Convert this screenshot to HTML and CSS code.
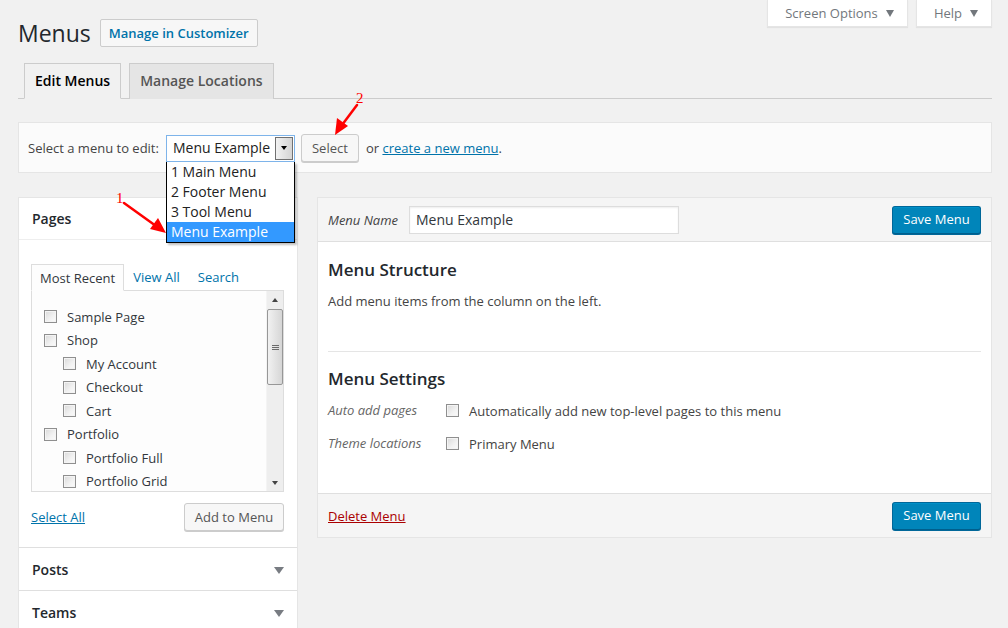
FILE: index.html
```html
<!DOCTYPE html>
<html>
<head>
<meta charset="utf-8">
<link rel="stylesheet" href="styles.css">
</head>
<body>
<div class="wrap">
  <div class="top">
    <div class="title-row">
      <h1 class="title">Menus</h1>
      <a class="btn btn-link">Manage in Customizer</a>
    </div>
    <div class="screen-links">
      <span class="screen-tab screen-tab-opts">Screen Options <i class="tri"></i></span>
      <span class="screen-tab screen-tab-help">Help <i class="tri"></i></span>
    </div>
  </div>

  <div class="nav-tabs">
    <span class="nav-tab active">Edit Menus</span>
    <span class="nav-tab">Manage Locations</span>
  </div>

  <div class="manage-bar">
    <span class="manage-label">Select a menu to edit:</span>
    <div class="select-wrap">
      <div class="fake-select">
        <span class="fake-select-value">Menu Example</span>
        <span class="fake-select-arrow"><i class="tri-black"></i></span>
      </div>
      <ul class="dropdown">
        <li>1 Main Menu</li>
        <li>2 Footer Menu</li>
        <li>3 Tool Menu</li>
        <li class="selected">Menu Example</li>
      </ul>
    </div>
    <span class="btn btn-select">Select</span>
    <span class="or-text">or <a class="link">create a new menu</a>.</span>
  </div>

  <div class="columns">
    <div class="left-col">
      <div class="acc-section open">
        <div class="acc-title">Pages</div>
        <div class="acc-content">
          <div class="tabs">
            <span class="tab active">Most Recent</span>
            <span class="tab">View All</span>
            <span class="tab">Search</span>
          </div>
          <div class="tab-panel">
            <ul class="checklist">
              <li><span class="cb"></span>Sample Page</li>
              <li><span class="cb"></span>Shop</li>
              <li class="child"><span class="cb"></span>My Account</li>
              <li class="child"><span class="cb"></span>Checkout</li>
              <li class="child"><span class="cb"></span>Cart</li>
              <li><span class="cb"></span>Portfolio</li>
              <li class="child"><span class="cb"></span>Portfolio Full</li>
              <li class="child"><span class="cb"></span>Portfolio Grid</li>
            </ul>
            <div class="scrollbar">
              <span class="sb-btn"><i class="sb-up"></i></span>
              <span class="sb-thumb"><i class="grip"></i><i class="grip"></i><i class="grip"></i></span>
              <span class="sb-track"></span>
              <span class="sb-btn"><i class="sb-down"></i></span>
            </div>
          </div>
          <div class="acc-actions">
            <a class="link">Select All</a>
            <span class="btn btn-add">Add to Menu</span>
          </div>
        </div>
      </div>
      <div class="acc-section">
        <div class="acc-title">Posts <i class="tri-gray"></i></div>
      </div>
      <div class="acc-section">
        <div class="acc-title">Teams <i class="tri-gray"></i></div>
      </div>
    </div>

    <div class="right-col">
      <div class="menu-header">
        <label class="menu-name-label">Menu Name</label>
        <div class="menu-name-input">Menu Example</div>
        <span class="btn-primary">Save Menu</span>
      </div>
      <div class="menu-body">
        <h3 class="section-title">Menu Structure</h3>
        <p class="hint">Add menu items from the column on the left.</p>
        <div class="divider"></div>
        <h3 class="section-title settings-title">Menu Settings</h3>
        <div class="setting-row">
          <span class="setting-label">Auto add pages</span>
          <span class="cb"></span>
          <span class="setting-text">Automatically add new top-level pages to this menu</span>
        </div>
        <div class="setting-row">
          <span class="setting-label">Theme locations</span>
          <span class="cb"></span>
          <span class="setting-text">Primary Menu</span>
        </div>
      </div>
      <div class="menu-footer">
        <a class="delete-link">Delete Menu</a>
        <span class="btn-primary">Save Menu</span>
      </div>
    </div>
  </div>
</div>

<svg class="annotations" width="1008" height="628" viewBox="0 0 1008 628">
  <g stroke="#ff0000" stroke-width="2.5" fill="none" stroke-linecap="round">
    <line x1="124" y1="203" x2="156" y2="226"/>
    <line x1="357" y1="105" x2="342" y2="125"/>
  </g>
  <g fill="#ff0000">
    <polygon points="166,233 150,229 158,218"/>
    <polygon points="335,135 337,118 348,126"/>
    <text x="116" y="203" class="anno-num">1</text>
    <text x="356" y="103" class="anno-num">2</text>
  </g>
</svg>
</body>
</html>
```

FILE: styles.css
```css
* { box-sizing: border-box; }

html, body {
  margin: 0;
  padding: 0;
}

body {
  background: #f1f1f1;
  font-family: "Open Sans", "Noto Sans", sans-serif;
  font-size: 13px;
  color: #444;
  width: 1008px;
  height: 628px;
  overflow: hidden;
  position: relative;
}

.wrap {
  padding: 0 16px 0 18px;
}

a { cursor: pointer; }

.link {
  color: #0073aa;
  text-decoration: underline;
}

/* top */
.top {
  display: flex;
  justify-content: space-between;
  align-items: flex-start;
}

.title-row {
  display: flex;
  align-items: center;
  gap: 9px;
  padding-top: 19px;
}

.title {
  margin: 0;
  font-size: 23px;
  font-weight: 400;
  line-height: 28px;
  color: #23282d;
}

.btn {
  display: inline-flex;
  align-items: center;
  justify-content: center;
  height: 28px;
  padding: 0 10px 1px;
  border: 1px solid #ccc;
  border-radius: 3px;
  background: #f7f7f7;
  box-shadow: 0 1px 0 #ccc;
  color: #555;
  font-size: 13px;
  line-height: 26px;
  white-space: nowrap;
}

.btn-link {
  color: #0073aa;
  font-weight: 600;
  background: #f7f7f7;
  box-shadow: none;
  border-radius: 2px;
  height: 28px;
  padding: 0 8px 1px;
}

.screen-links {
  display: flex;
  gap: 8px;
}

.screen-tab {
  display: inline-flex;
  align-items: center;
  justify-content: center;
  gap: 8px;
  height: 27px;
  padding: 0 6px 1px 10px;
  background: #fff;
  border: 1px solid #e5e5e5;
  border-top: none;
  box-shadow: 0 1px 1px rgba(0,0,0,0.06);
  color: #72777c;
  font-size: 13px;
  white-space: nowrap;
}

.screen-tab-opts { width: 141px; }
.screen-tab-help { width: 76px; }

.tri {
  display: inline-block;
  width: 0;
  height: 0;
  border-left: 4.5px solid transparent;
  border-right: 4.5px solid transparent;
  border-top: 7px solid #72777c;
  margin-top: 2px;
}

/* nav tabs */
.nav-tabs {
  margin-top: 16px;
  border-bottom: 1px solid #ccc;
  display: flex;
  gap: 8px;
  padding-left: 6px;
  height: 36px;
}

.nav-tab {
  display: inline-block;
  height: 36px;
  padding: 5px 10px;
  border: 1px solid #ccc;
  border-bottom: none;
  background: #e5e5e5;
  color: #555;
  font-size: 14px;
  font-weight: 600;
  line-height: 24px;
}

.nav-tab.active {
  background: #f1f1f1;
  color: #000;
  height: 36px;
  margin-bottom: -1px;
  border-bottom: 1px solid #f1f1f1;
}

/* manage bar */
.manage-bar {
  margin-top: 23px;
  height: 51px;
  border: 1px solid #e5e5e5;
  background: #fbfbfb;
  display: flex;
  align-items: center;
  padding: 1px 9px 0;
  color: #444;
}

.manage-label {
  margin-right: 7px;
}

.select-wrap {
  position: relative;
  margin-right: 7px;
}

.fake-select {
  width: 129px;
  height: 27px;
  border: 1px solid #7eb4ea;
  background: #fff;
  display: flex;
  align-items: stretch;
}

.fake-select-value {
  flex: 1;
  padding-left: 6px;
  font-size: 14px;
  line-height: 24px;
  color: #222;
}

.fake-select-arrow {
  width: 18px;
  margin: 1px;
  border: 1px solid #707070;
  background: linear-gradient(to right, #f2f2f2, #d4d4d4);
  display: flex;
  align-items: center;
  justify-content: center;
}

.tri-black {
  width: 0;
  height: 0;
  border-left: 3.5px solid transparent;
  border-right: 3.5px solid transparent;
  border-top: 4px solid #000;
}

.dropdown {
  position: absolute;
  top: 27px;
  left: 0;
  width: 129px;
  margin: 0;
  padding: 0;
  list-style: none;
  background: #fff;
  border: 1px solid #000;
  border-top: none;
  box-shadow: 2px 2px 2px rgba(0,0,0,0.25);
  z-index: 5;
}

.dropdown li {
  height: 20px;
  line-height: 20px;
  padding-left: 4px;
  font-size: 14px;
  color: #222;
}

.dropdown li.selected {
  background: #3399ff;
  color: #fff;
}

.btn-select {
  width: 58px;
  margin-right: 7px;
  margin-left: -1px;
}

.or-text { color: #444; }

/* columns */
.columns {
  margin-top: 24px;
  display: flex;
  gap: 19px;
  align-items: flex-start;
}

.left-col {
  width: 280px;
  flex: none;
  border: 1px solid #e5e5e5;
  background: #fff;
}

.acc-section {
  border-top: 1px solid #dfdfdf;
}

.acc-section:first-child { border-top: none; }

.acc-title {
  height: 42px;
  display: flex;
  align-items: center;
  justify-content: space-between;
  padding: 0 13px 0 13px;
  font-size: 14px;
  font-weight: 600;
  color: #23282d;
  background: #fff;
}

.acc-section.open .acc-title {
  border-bottom: 1px solid #eee;
}

.tri-gray {
  width: 0;
  height: 0;
  border-left: 5px solid transparent;
  border-right: 5px solid transparent;
  border-top: 7px solid #787c82;
  margin-top: 2px;
}

.acc-content {
  padding: 24px 13px 16px 12px;
}

.tabs {
  display: flex;
  align-items: flex-end;
  height: 26px;
}

.tab {
  color: #0073aa;
  padding: 0 9px;
  line-height: 26px;
}

.tab.active {
  color: #32373c;
  border: 1px solid #ddd;
  border-bottom: 1px solid #fdfdfd;
  background: #fdfdfd;
  height: 27px;
  margin-bottom: -1px;
  padding: 0 8px;
  position: relative;
  z-index: 1;
}

.tab-panel {
  height: 202px;
  border: 1px solid #ddd;
  background: #fdfdfd;
  display: flex;
  overflow: hidden;
}

.checklist {
  flex: 1;
  list-style: none;
  margin: 0;
  padding: 14px 0 0 12px;
}

.checklist li {
  height: 23.5px;
  display: flex;
  align-items: center;
  color: #32373c;
  font-size: 13px;
}

.checklist li.child {
  padding-left: 19px;
}

.cb {
  display: inline-block;
  flex: none;
  width: 13px;
  height: 13px;
  border: 1px solid #8f8f8f;
  background: linear-gradient(135deg, #d9d9d9 0%, #f2f2f2 60%, #fbfbfb 100%);
  box-shadow: inset 0 0 0 1px #f4f4f4;
  margin-right: 10px;
}

.scrollbar {
  width: 17px;
  flex: none;
  display: flex;
  flex-direction: column;
  background: #eee;
  border-left: 1px solid #f4f4f4;
}

.sb-btn {
  height: 17px;
  display: flex;
  align-items: center;
  justify-content: center;
  flex: none;
}

.sb-up {
  width: 0;
  height: 0;
  border-left: 3.5px solid transparent;
  border-right: 3.5px solid transparent;
  border-bottom: 4px solid #444;
}

.sb-down {
  width: 0;
  height: 0;
  border-left: 3.5px solid transparent;
  border-right: 3.5px solid transparent;
  border-top: 4px solid #444;
}

.sb-thumb {
  height: 76px;
  margin: 1px 0 0 0;
  border: 1px solid #979797;
  border-radius: 2px;
  background: linear-gradient(to right, #f1f1f1, #d6d6d6);
  display: flex;
  flex-direction: column;
  align-items: center;
  justify-content: center;
  gap: 1px;
  flex: none;
}

.grip {
  width: 7px;
  height: 1px;
  background: #6b6b6b;
}

.sb-track { flex: 1; }

.acc-actions {
  display: flex;
  justify-content: space-between;
  align-items: center;
  margin-top: 11px;
}

.btn-add {
  width: 100px;
  padding: 0;
}

/* right */
.right-col {
  flex: 1;
  border: 1px solid #e5e5e5;
  background: #fff;
}

.menu-header {
  height: 44px;
  background: #f5f5f5;
  border-bottom: 1px solid #dfdfdf;
  display: flex;
  align-items: center;
  padding: 0 10px;
}

.menu-name-label {
  font-style: italic;
  color: #444;
  width: 81px;
}

.menu-name-input {
  width: 270px;
  height: 28px;
  border: 1px solid #ddd;
  box-shadow: inset 0 1px 2px rgba(0,0,0,0.07);
  background: #fff;
  padding-left: 6px;
  font-size: 14px;
  line-height: 26px;
  color: #32373c;
}

.btn-primary {
  margin-left: auto;
  display: inline-flex;
  align-items: center;
  justify-content: center;
  width: 89px;
  height: 28px;
  background: #0085ba;
  border: 1px solid #006799;
  border-bottom-color: #005f8d;
  border-radius: 3px;
  box-shadow: inset 0 1px 0 #0090c8, 0 1px 0 #006799;
  color: #fff;
  font-size: 13px;
  padding-bottom: 1px;
}

.menu-body {
  padding: 13px 10px 33px;
}

.section-title {
  margin: 0;
  font-size: 17px;
  font-weight: 600;
  line-height: 30px;
  color: #23282d;
}

.hint {
  margin: 0;
  line-height: 24px;
  margin-top: 4px;
  color: #444;
}

.divider {
  margin-top: 38px;
  border-top: 1px solid #e5e5e5;
}

.settings-title {
  margin-top: 12px;
}

.setting-row {
  display: flex;
  align-items: center;
  height: 33px;
}

.setting-label {
  width: 118px;
  font-style: italic;
  color: #666;
  margin-top: -2px;
}

.setting-text {
  color: #444;
}

.menu-footer {
  height: 44px;
  background: #f5f5f5;
  border-top: 1px solid #dfdfdf;
  display: flex;
  align-items: center;
  padding: 0 10px;
}

.delete-link {
  color: #a00;
  text-decoration: underline;
}

/* annotations overlay */
.annotations {
  position: absolute;
  left: 0;
  top: 0;
  pointer-events: none;
  z-index: 10;
}

.anno-num {
  font-family: "Liberation Serif", "DejaVu Serif", serif;
  font-size: 15px;
}
```
